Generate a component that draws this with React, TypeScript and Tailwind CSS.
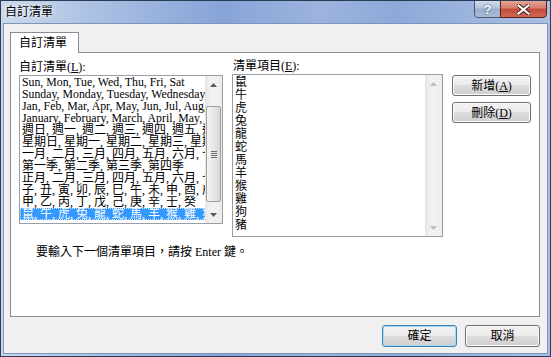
import React from "react";

const listFont = "font-['Liberation_Serif','Noto_Sans_CJK_TC',serif]";

const leftItems = [
  "Sun, Mon, Tue, Wed, Thu, Fri, Sat",
  "Sunday, Monday, Tuesday, Wednesday, Thursday, Friday, Saturday",
  "Jan, Feb, Mar, Apr, May, Jun, Jul, Aug, Sep, Oct, Nov, Dec",
  "January, February, March, April, May, June, July, August, September, October, November, December",
  "週日, 週一, 週二, 週三, 週四, 週五, 週六",
  "星期日, 星期一, 星期二, 星期三, 星期四, 星期五, 星期六",
  "一月, 二月, 三月, 四月, 五月, 六月, 七月, 八月, 九月, 十月, 十一月, 十二月",
  "第一季, 第二季, 第三季, 第四季",
  "正月, 二月, 三月, 四月, 五月, 六月, 七月, 八月, 九月, 十月, 十一月, 臘月",
  "子, 丑, 寅, 卯, 辰, 巳, 午, 未, 申, 酉, 戌, 亥",
  "甲, 乙, 丙, 丁, 戊, 己, 庚, 辛, 壬, 癸",
  "鼠, 牛, 虎, 兔, 龍, 蛇, 馬, 羊, 猴, 雞, 狗, 豬",
];

const rightItems = ["鼠", "牛", "虎", "兔", "龍", "蛇", "馬", "羊", "猴", "雞", "狗", "豬"];

function Arrow({ up, disabled }: { up?: boolean; disabled?: boolean }) {
  return (
    <svg width="7" height="4" viewBox="0 0 7 4">
      <path d={up ? "M0 4L3.5 0L7 4Z" : "M0 0L3.5 4L7 0Z"} fill={disabled ? "#bcbcbc" : "#5a5a5a"} />
    </svg>
  );
}

function ScrollBar({ disabled }: { disabled?: boolean }) {
  return (
    <div className="w-[17px] h-full flex flex-col bg-[linear-gradient(90deg,#e4e4e4,#f1f1f1_30%,#f1f1f1_70%,#ebebeb)]">
      <div className="h-[17px] flex items-center justify-center">
        <Arrow up disabled={disabled} />
      </div>
      <div className="flex-1 flex flex-col">
        {!disabled && (
          <div className="mt-[13px] h-[96px] mx-[1px] rounded-[2px] border border-[#a0a0a0] bg-[linear-gradient(90deg,#f4f4f4,#e8e8e8_50%,#d6d6d6)] flex flex-col items-center justify-center gap-[1px]">
            <div className="w-[6px] h-[1px] bg-[#6e6e6e]" />
            <div className="w-[6px] h-[1px] bg-[#6e6e6e]" />
            <div className="w-[6px] h-[1px] bg-[#6e6e6e]" />
            <div className="w-[6px] h-[1px] bg-[#6e6e6e]" />
          </div>
        )}
      </div>
      <div className="h-[17px] flex items-center justify-center">
        <Arrow disabled={disabled} />
      </div>
    </div>
  );
}

function Btn({ children, def, w }: { children: React.ReactNode; def?: boolean; w: string }) {
  return (
    <div
      className={`${w} flex items-center justify-center rounded-[3px] border ${
        def ? "border-[#3c7fb1] shadow-[inset_0_0_0_1px_#9fdcf8]" : "border-[#707070] shadow-[inset_0_0_0_1px_#fbfbfb]"
      } bg-[linear-gradient(#f2f2f2_0%,#ebebeb_50%,#dddddd_50%,#cfcfcf_100%)] leading-[12px]`}
    >
      {children}
    </div>
  );
}

function TitleBar() {
  return (
    <div className="h-[22px] flex items-start justify-between pl-[4px] pr-[3px]">
      <div className="mt-[3px] text-[12px] leading-[14px] font-['Noto_Sans_CJK_TC',sans-serif] [text-shadow:0_0_6px_#ffffff,0_0_3px_#ffffff]">
        自訂清單
      </div>
      <div className="flex -mt-px">
        <div className="w-[27px] h-[18px] rounded-bl-[4px] border border-[#4a5a75] bg-[linear-gradient(#d0dbea,#b2c1d8_45%,#9aaecb_50%,#a9bbd6)] flex items-center justify-center text-white font-bold text-[13px] leading-none font-['Liberation_Sans',sans-serif] [text-shadow:0_0_2px_#26344d]">
          ?
        </div>
        <div className="w-[47px] h-[18px] -ml-px rounded-br-[4px] border border-[#5b2018] bg-[linear-gradient(#e6a598,#d47b6b_45%,#c4493a_50%,#d06a55)] flex items-center justify-center">
          <svg width="13" height="11" viewBox="0 0 13 11">
            <path d="M1.5 1.5L11.5 9.5M11.5 1.5L1.5 9.5" stroke="#3b1610" strokeWidth="4" strokeLinecap="square" />
            <path d="M1.5 1.5L11.5 9.5M11.5 1.5L1.5 9.5" stroke="#ffffff" strokeWidth="2.2" strokeLinecap="square" />
          </svg>
        </div>
      </div>
    </div>
  );
}

export default function App() {
  return (
    <div className={`w-[551px] h-[357px] border border-[#2a3b55] flex flex-col overflow-hidden text-[12px] text-black ${listFont} bg-[linear-gradient(90deg,#cbd8ea_0%,#a9bfe3_18%,#88a4d7_40%,#9cb3de_58%,#8ea9d9_72%,#aabfe4_100%)]`}>
      <TitleBar />
      <div className="flex-1 mx-[2px] mb-[2px] border border-[#7d95bb] bg-[#f0f0f0] flex flex-col pt-[8px] pl-[6px] pr-[7px]">
        <div className="flex">
          <div className="relative z-10 w-[69px] h-[21px] -mb-px border border-b-0 border-[#898c95] bg-white flex items-center pl-[8px] pt-[1px] leading-[13px]">
            自訂清單
          </div>
        </div>
        <div className="h-[265px] border border-[#898c95] bg-white pt-[7px] pl-[8px] flex flex-col">
          <div className="flex items-start">
            <div className="w-[204px] flex flex-col">
              <div className="mt-[1px] h-[13px] leading-[13px]">
                自訂清單(<span className="underline">L</span>):
              </div>
              <div className="mt-[1px] h-[149px] border border-[#9a9ea6] flex">
                <div className="flex-1 min-w-0 overflow-hidden flex flex-col">
                  {leftItems.map((t, i) => (
                    <div
                      key={i}
                      className={`shrink-0 h-[12px] leading-[12px] whitespace-nowrap pl-[2px] ${
                        i < 4 ? "text-[11.8px]" : "text-[12px]"
                      } ${i === 11 ? "bg-[#3399ff] text-white outline outline-1 outline-dotted outline-offset-[-1px] outline-[#cfe4fb]" : ""}`}
                    >
                      {t}
                    </div>
                  ))}
                </div>
                <ScrollBar />
              </div>
            </div>
            <div className="ml-[9px] w-[211px] flex flex-col">
              <div className="h-[13px] leading-[13px] pl-[1px]">
                清單項目(<span className="underline">E</span>):
              </div>
              <div className="mt-[1px] h-[163px] border border-[#9a9ea6] flex">
                <div className="flex-1 min-w-0 overflow-hidden flex flex-col pt-[1px] pl-[2px]">
                  {rightItems.map((t) => (
                    <div key={t} className="shrink-0 h-[13px] leading-[13px]">
                      {t}
                    </div>
                  ))}
                </div>
                <ScrollBar disabled />
              </div>
            </div>
            <div className="ml-[9px] mt-[15px] flex flex-col gap-[6px]">
              <Btn w="w-[79px] h-[21px]">
                新增(<span className="underline">A</span>)
              </Btn>
              <Btn w="w-[79px] h-[21px]">
                刪除(<span className="underline">D</span>)
              </Btn>
            </div>
          </div>
          <div className="mt-[8px] ml-[17px] leading-[14px]">要輸入下一個清單項目，請按 Enter 鍵。</div>
        </div>
        <div className="mt-[8px] flex justify-end gap-[8px]">
          <Btn def w="w-[75px] h-[22px]">
            確定
          </Btn>
          <Btn w="w-[75px] h-[22px]">取消</Btn>
        </div>
      </div>
    </div>
  );
}
